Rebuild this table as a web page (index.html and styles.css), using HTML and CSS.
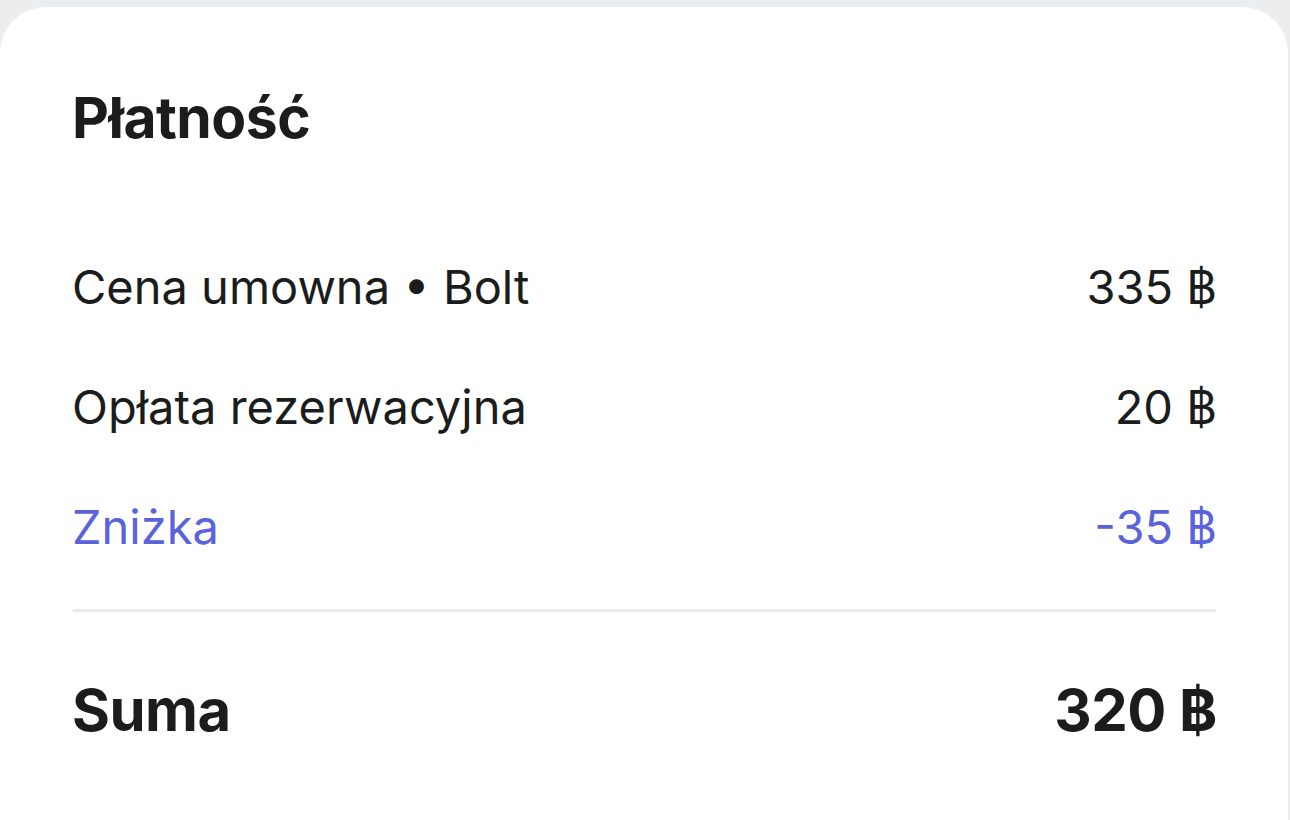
FILE: index.html
```html
<!DOCTYPE html>
<html lang="pl">
<head>
<meta charset="utf-8">
<link rel="stylesheet" href="styles.css">
</head>
<body>
<div class="card">
  <h1 class="title">Płatność</h1>
  <div class="rows">
    <div class="row"><span>Cena umowna • Bolt</span><span>335 ฿</span></div>
    <div class="row"><span>Opłata rezerwacyjna</span><span>20 ฿</span></div>
    <div class="row discount"><span>Zniżka</span><span>-35 ฿</span></div>
  </div>
  <div class="divider"></div>
  <div class="row total"><span>Suma</span><span>320 ฿</span></div>
</div>
</body>
</html>
```
FILE: styles.css
```css
html, body {
  margin: 0;
  padding: 0;
  background: #ecedee;
  height: 820px;
  overflow: hidden;
}
body {
  padding-top: 7px;
  font-family: Inter, "Noto Sans", sans-serif;
  color: #1b1c1c;
}
.card {
  background: #ffffff;
  border-radius: 46px 46px 0 0;
  margin-right: 2px;
  height: 813px;
  padding: 0 71px 0 72px;
  box-sizing: border-box;
}
.title {
  margin: 0;
  padding-top: 76px;
  font-size: 57px;
  font-weight: 700;
  letter-spacing: -0.5px;
  line-height: 70px;
}
.rows {
  margin-top: 74px;
  display: flex;
  flex-direction: column;
}
.row {
  display: flex;
  justify-content: space-between;
  font-size: 47px;
  line-height: 120px;
}
.discount {
  color: #5b63dc;
}
.divider {
  height: 3px;
  background: #ebebeb;
  margin: 22px 1px 0 1px;
}
.total {
  font-weight: 700;
  font-size: 58px;
  letter-spacing: -0.5px;
  margin-top: 38px;
}
```
